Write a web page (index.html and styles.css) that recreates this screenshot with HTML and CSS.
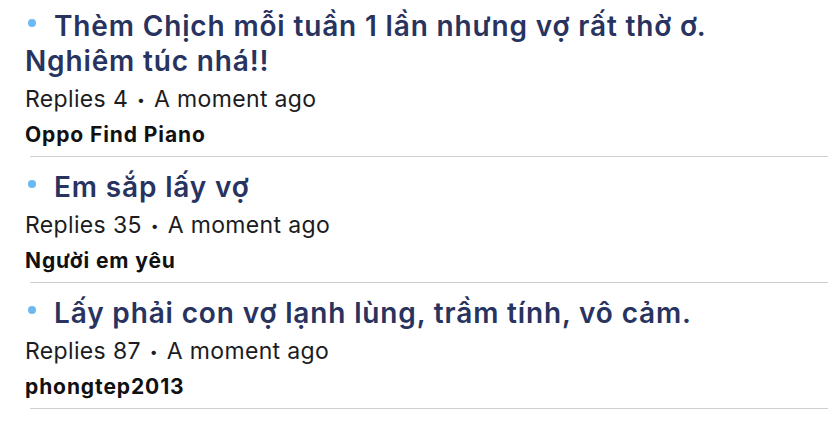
FILE: index.html
```html
<!DOCTYPE html>
<html lang="vi">
<head>
<meta charset="utf-8">
<link rel="stylesheet" href="styles.css">
</head>
<body>
<ul class="topics">
  <li class="topic">
    <div class="topic-body">
      <h2 class="title"><span class="dot"></span>Thèm Chịch mỗi tuần 1 lần nhưng vợ rất thờ ơ. Nghiêm túc nhá!!</h2>
      <div class="meta">Replies 4 <span class="sep">•</span> A moment ago</div>
      <div class="author">Oppo Find Piano</div>
    </div>
  </li>
  <li class="topic">
    <div class="topic-body">
      <h2 class="title"><span class="dot"></span>Em sắp lấy vợ</h2>
      <div class="meta">Replies 35 <span class="sep">•</span> A moment ago</div>
      <div class="author">Người em yêu</div>
    </div>
  </li>
  <li class="topic">
    <div class="topic-body">
      <h2 class="title"><span class="dot"></span>Lấy phải con vợ lạnh lùng, trầm tính, vô cảm.</h2>
      <div class="meta">Replies 87 <span class="sep">•</span> A moment ago</div>
      <div class="author">phongtep2013</div>
    </div>
  </li>
</ul>
</body>
</html>
```
FILE: styles.css
```css
html, body {
  margin: 0;
  padding: 0;
  background: #ffffff;
}
body {
  font-family: Inter, "Noto Sans", sans-serif;
  color: #111;
}
.topics {
  list-style: none;
  margin: 0;
  padding: 9px 0 0 30px;
}
.topic {
  border-bottom: 1px solid #cfcfd2;
  padding-bottom: 6px;
  margin-bottom: 13px;
}
.topic-body {
  margin-left: -5px;
  padding-right: 100px;
}
.title {
  margin: 0;
  font-size: 28px;
  line-height: 35px;
  font-weight: 600;
  letter-spacing: 0.85px;
  color: #28335f;
}
.dot {
  display: inline-block;
  width: 8px;
  height: 8px;
  border-radius: 50%;
  background: #6cb8f2;
  margin: 0 18px 0 3px;
  vertical-align: 9px;
}
.meta {
  margin-top: 3px;
  font-size: 23px;
  line-height: 34px;
  letter-spacing: 0.35px;
  color: #1c1c1e;
}
.sep {
  font-size: 14px;
  vertical-align: 2px;
  margin: 0 2px;
}
.author {
  margin-top: 3px;
  font-size: 21px;
  line-height: 30px;
  font-weight: 700;
  letter-spacing: 0.9px;
  color: #111;
}
```
